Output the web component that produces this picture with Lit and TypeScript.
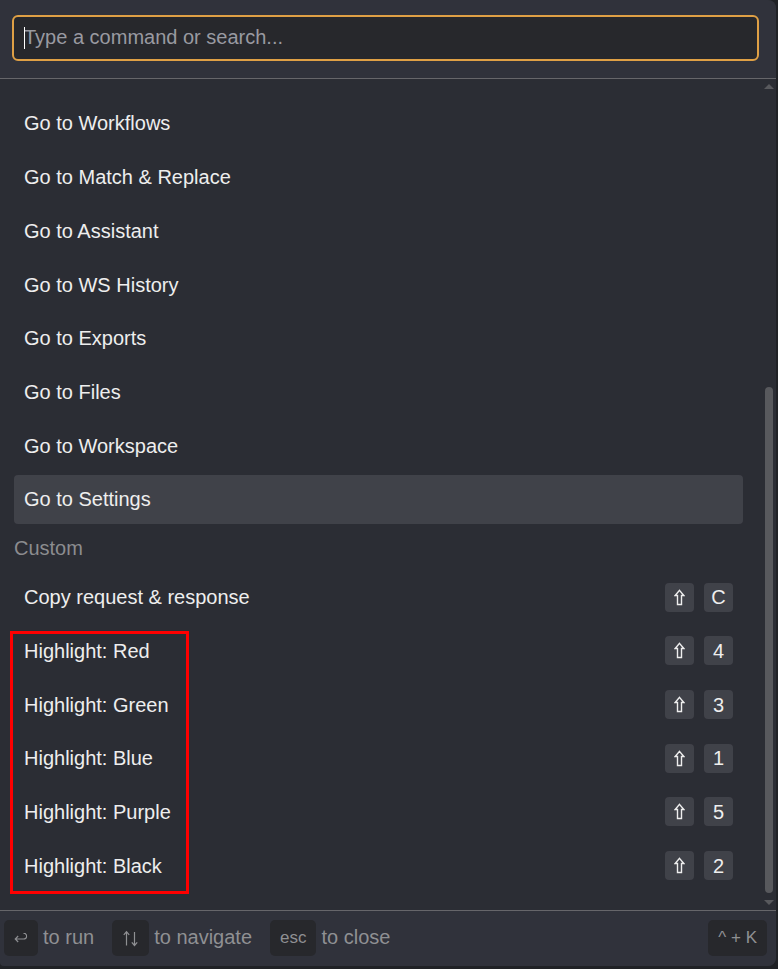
import { LitElement, html, css, svg } from "lit";
import { customElement, property } from "lit/decorators.js";

interface Command {
  label: string;
  key?: string;
}

const NAVIGATION: Command[] = [
  { label: "Go to Workflows" },
  { label: "Go to Match & Replace" },
  { label: "Go to Assistant" },
  { label: "Go to WS History" },
  { label: "Go to Exports" },
  { label: "Go to Files" },
  { label: "Go to Workspace" },
  { label: "Go to Settings" },
];

const COPY: Command[] = [{ label: "Copy request & response", key: "C" }];

const HIGHLIGHTS: Command[] = [
  { label: "Highlight: Red", key: "4" },
  { label: "Highlight: Green", key: "3" },
  { label: "Highlight: Blue", key: "1" },
  { label: "Highlight: Purple", key: "5" },
  { label: "Highlight: Black", key: "2" },
];

const shiftIcon = html`<svg width="11" height="17" viewBox="0 0 11 17" role="img" aria-label="Shift">
  ${svg`<path d="M5.5 1.4 L9.8 6.5 H7.5 V15.5 H3.5 V6.5 H1.2 Z" fill="none" stroke="currentColor" stroke-width="1.4"/>`}
</svg>`;

const returnIcon = html`<svg width="14" height="12" viewBox="0 0 14 12" role="img" aria-label="Enter">
  ${svg`<path d="M4.2 4 L1.2 7 L4.2 10 M1.2 7 H9.5 C13.2 7 13.4 3 11.2 1.5 H9.5" fill="none" stroke="currentColor" stroke-width="1.1"/>`}
</svg>`;

const arrowsIcon = html`<svg width="17" height="18" viewBox="0 0 17 18" role="img" aria-label="Up and down">
  ${svg`<path d="M4.5 16.5 V3 M1.8 5.8 L4.5 2.6 L7.2 5.8 M12.5 3 V16.5 M9.8 13.3 L12.5 16.5 L15.2 13.3" fill="none" stroke="currentColor" stroke-width="1.2"/>`}
</svg>`;

@customElement("command-row")
export class CommandRow extends LitElement {
  @property() label = "";
  @property() key = "";
  @property({ type: Boolean }) selected = false;

  static styles = css`
    :host {
      display: flex;
      flex: 1;
      padding: 3px 0 2px;
    }
    .row {
      flex: 1;
      display: flex;
      align-items: center;
      gap: 10px;
      min-height: 40px;
      margin: 0;
      padding: 0 10px;
      border: 0;
      border-radius: 4px;
      background: none;
      color: #eeeeee;
      font: inherit;
      text-align: left;
    }
    .row.selected {
      background: #404249;
    }
    .label {
      flex: 1;
    }
    .key {
      display: flex;
      align-items: center;
      justify-content: center;
      width: 29px;
      height: 29px;
      border-radius: 4px;
      background: #404249;
      font: inherit;
    }
  `;

  render() {
    return html`<button class="row ${this.selected ? "selected" : ""}" type="button">
      <span class="label">${this.label}</span>
      ${this.key ? html`<kbd class="key">${shiftIcon}</kbd><kbd class="key">${this.key}</kbd>` : null}
    </button>`;
  }
}

@customElement("app-root")
export class AppRoot extends LitElement {
  static styles = css`
    :host {
      display: flex;
      min-height: 100vh;
      box-sizing: border-box;
      padding: 0 2px 3px 0;
      background: #202226;
      font: 20px/24px "Liberation Sans", Arial, sans-serif;
      color: #eeeeee;
    }
    .palette {
      flex: 1;
      display: flex;
      flex-direction: column;
      overflow: hidden;
      border-radius: 0 8px 8px 4px;
      background: #2b2d34;
    }
    .search {
      position: relative;
      display: flex;
      padding: 15px 17px 17px 12px;
      border-bottom: 1px solid #66666a;
      background: #30323b;
    }
    .input {
      flex: 1;
      min-width: 0;
      height: 46px;
      box-sizing: border-box;
      padding: 0 10px 2px;
      border: 2px solid #dfa045;
      border-radius: 6px;
      outline: none;
      background: #27282c;
      color: #eeeeee;
      font: inherit;
    }
    .input::placeholder {
      color: #999aa1;
      opacity: 1;
    }
    .caret {
      position: absolute;
      left: 24px;
      top: 27px;
      width: 1px;
      height: 22px;
      background: #ffffff;
    }
    .body {
      flex: 1;
      display: flex;
    }
    .list {
      flex: 1;
      display: flex;
      flex-direction: column;
      padding: 17px 19px 18px 14px;
    }
    .group {
      display: flex;
      flex-direction: column;
      margin: 0;
      padding: 0;
      list-style: none;
    }
    .group.navigation {
      flex: 8 0 0;
    }
    .group.copy {
      flex: 1 0 0;
    }
    .group.highlights {
      position: relative;
      flex: 5 0 0;
    }
    .group.highlights::after {
      content: "";
      position: absolute;
      top: 8px;
      bottom: -2px;
      left: -4px;
      width: 179px;
      box-sizing: border-box;
      border: 3px solid #ff0000;
      pointer-events: none;
    }
    .item {
      flex: 1;
      display: flex;
    }
    .heading {
      margin: 0;
      font: inherit;
      line-height: 44px;
      color: #8b8c8f;
    }
    .scrollbar {
      display: flex;
      flex-direction: column;
      align-items: center;
      width: 14px;
      padding: 5px 0;
    }
    .arrow {
      border: 5px solid transparent;
    }
    .arrow.up {
      border-top: 0;
      border-bottom-color: #58595d;
    }
    .arrow.down {
      border-bottom: 0;
      border-top-color: #58595d;
    }
    .track {
      flex: 1;
      display: flex;
      flex-direction: column;
      padding-bottom: 7px;
    }
    .above {
      flex: 298;
    }
    .thumb {
      flex: 505;
      width: 8px;
      border-radius: 4px;
      background: #58595d;
    }
    .footer {
      display: flex;
      flex-wrap: wrap;
      align-items: center;
      gap: 18px;
      padding: 9px 9px 10px 4px;
      border-top: 1px solid #66666a;
      background: #30323b;
      color: #8f9093;
    }
    .hint {
      display: flex;
      align-items: center;
      gap: 5px;
    }
    .cap {
      display: flex;
      align-items: center;
      justify-content: center;
      height: 36px;
      box-sizing: border-box;
      padding: 0 10px;
      border-radius: 5px;
      background: #27282c;
      font: inherit;
      font-size: 17px;
    }
    .hint-text {
      padding-bottom: 2px;
    }
    .shortcut {
      margin-left: auto;
    }
  `;

  private rows(commands: Command[], selected = "") {
    return commands.map(
      (c) => html`<li class="item">
        <command-row .label=${c.label} .key=${c.key ?? ""} .selected=${c.label === selected}></command-row>
      </li>`
    );
  }

  render() {
    return html`<main class="palette">
      <div class="search">
        <input class="input" type="text" aria-label="Command" placeholder="Type a command or search..." />
        <span class="caret"></span>
      </div>
      <div class="body">
        <div class="list">
          <ul class="group navigation">${this.rows(NAVIGATION, "Go to Settings")}</ul>
          <h2 class="heading">Custom</h2>
          <ul class="group copy">${this.rows(COPY)}</ul>
          <ul class="group highlights">${this.rows(HIGHLIGHTS)}</ul>
        </div>
        <div class="scrollbar" aria-hidden="true">
          <span class="arrow up"></span>
          <div class="track"><div class="above"></div><div class="thumb"></div></div>
          <span class="arrow down"></span>
        </div>
      </div>
      <footer class="footer">
        <span class="hint"><kbd class="cap">${returnIcon}</kbd><span class="hint-text">to run</span></span>
        <span class="hint"><kbd class="cap">${arrowsIcon}</kbd><span class="hint-text">to navigate</span></span>
        <span class="hint"><kbd class="cap">esc</kbd><span class="hint-text">to close</span></span>
        <kbd class="cap shortcut">^ + K</kbd>
      </footer>
    </main>`;
  }
}
